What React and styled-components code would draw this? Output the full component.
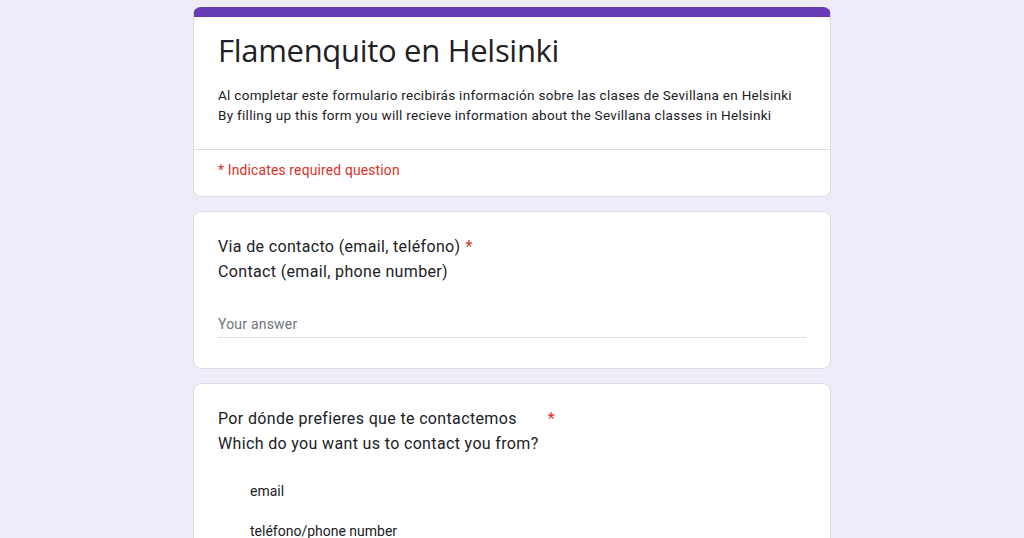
import React from "react";
import styled, { createGlobalStyle } from "styled-components";

const GlobalStyle = createGlobalStyle`
  body {
    margin: 0;
    background: #efebf8;
    font-family: Roboto, "Noto Sans", Arial, sans-serif;
    color: #202124;
  }
`;

const questions = [
  {
    id: "contact",
    lines: ["Via de contacto (email, teléfono)", "Contact (email, phone number)"],
    starGap: 5,
    kind: "text",
  },
  {
    id: "channel",
    lines: ["Por dónde prefieres que te contactemos", "Which do you want us to contact you from?"],
    starGap: 31,
    kind: "choice",
    options: ["email", "teléfono/phone number"],
  },
];

const App = () => (
  <Page>
    <GlobalStyle />
    <Column>
      <HeaderCard>
        <HeaderBody>
          <Title>Flamenquito en Helsinki</Title>
          <Description>
            Al completar este formulario recibirás información sobre las clases de Sevillana en Helsinki
            <br />
            By filling up this form you will recieve information about the Sevillana classes in Helsinki
          </Description>
        </HeaderBody>
        <Required>* Indicates required question</Required>
      </HeaderCard>

      {questions.map((q) => (
        <Card key={q.id}>
          <Question>
            {q.lines[0]}
            <Star $gap={q.starGap}>*</Star>
            <br />
            {q.lines[1]}
          </Question>
          {q.kind === "text" ? (
            <Answer>Your answer</Answer>
          ) : (
            <Options>
              {q.options.map((o) => (
                <Option key={o}>{o}</Option>
              ))}
            </Options>
          )}
        </Card>
      ))}
    </Column>
  </Page>
);

export default App;

const Page = styled.div`
  height: 538px;
  overflow: hidden;
`;

const Column = styled.div`
  width: 638px;
  margin: 0 auto;
  padding-top: 7px;
  display: flex;
  flex-direction: column;
  gap: 14px;
`;

const Card = styled.div`
  background: #fff;
  border-radius: 8px;
  border: 1px solid #dadce0;
  padding: 22px 24px 30px;
  display: flex;
  flex-direction: column;
`;

const HeaderCard = styled.div`
  background: #fff;
  border-radius: 8px;
  border-top: 10px solid #673ab7;
  border-left: 1px solid #dadce0;
  border-right: 1px solid #dadce0;
  border-bottom: 1px solid #dadce0;
  overflow: hidden;
`;

const HeaderBody = styled.div`
  padding: 10px 24px 24px;
  border-bottom: 1px solid #dadce0;
`;

const Title = styled.h1`
  margin: 0;
  font-family: "Open Sans", Roboto, sans-serif;
  font-weight: 400;
  font-size: 31px;
  line-height: 46px;
  letter-spacing: -0.3px;
  color: #202124;
`;

const Description = styled.div`
  margin-top: 12px;
  font-size: 13.5px;
  line-height: 20px;
  letter-spacing: 0.3px;
  color: #202124;
`;

const Required = styled.div`
  padding: 11px 24px 17px;
  font-size: 13.8px;
  line-height: 18px;
  letter-spacing: 0.2px;
  color: #d93025;
`;

const Question = styled.div`
  font-size: 16px;
  line-height: 25px;
  letter-spacing: 0.35px;
  color: #202124;
`;

const Star = styled.span`
  color: #d93025;
  margin-left: ${(p) => p.$gap}px;
`;

const Answer = styled.div`
  margin-top: 31px;
  font-size: 14px;
  line-height: 18px;
  color: #70757a;
  letter-spacing: 0.2px;
  padding-bottom: 4px;
  border-bottom: 1px solid #dadce0;
`;

const Options = styled.div`
  margin-top: 26px;
  padding-left: 32px;
  display: flex;
  flex-direction: column;
  gap: 22px;
`;

const Option = styled.div`
  font-size: 14px;
  line-height: 18px;
  color: #202124;
`;
